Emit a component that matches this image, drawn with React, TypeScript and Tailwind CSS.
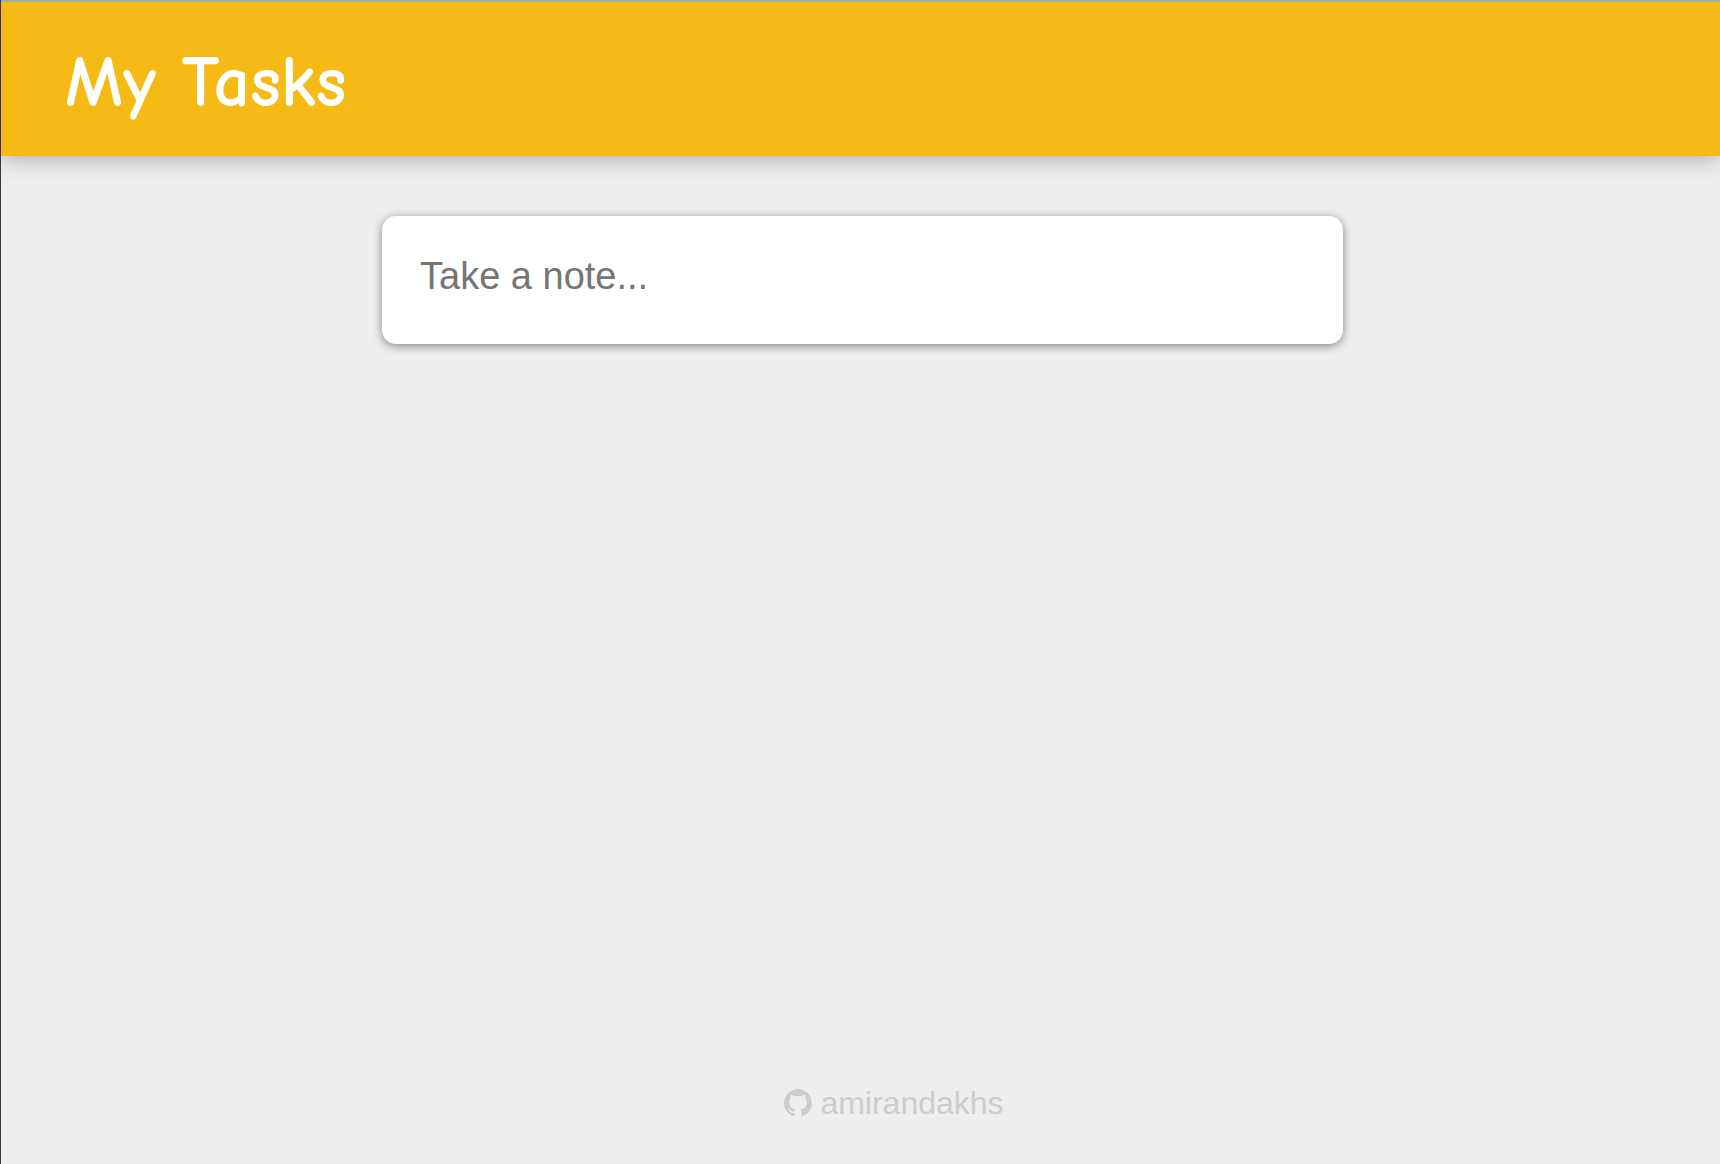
function GithubMark() {
  return (
    <svg viewBox="0 0 1536 1536" className="size-7" fill="currentColor" aria-hidden="true">
      <path d="M768 0q209 0 385.5 103t279.5 279.5 103 385.5q0 251-146.5 451.5t-378.5 277.5q-27 5-40-7t-13-30q0-3 .5-76.5t.5-134.5q0-97-52-142 57-6 102.5-18t94-39 81-66.5 53-105 20.5-150.5q0-119-79-206 37-91-8-204-28-9-81 11t-92 44l-38 24q-93-26-192-26t-192 26q-16-11-42.5-27t-83.5-38.5-85-13.5q-45 113-8 204-79 87-79 206 0 85 20.5 150t52.5 105 80.5 67 94 39 102.5 18q-39 36-49 103-21 10-45 15t-57 5-65.5-21.5-55.5-62.5q-19-32-48.5-52t-49.5-24l-20-3q-21 0-29 4.5t-5 11.5 9 14 13 12l7 5q22 10 43.5 38t31.5 51l10 23q13 38 44 61.5t67 30 69.5 7 55.5-3.5l23-4q0 38 .5 88.5t.5 54.5q0 18-13 30t-40 7q-232-77-378.5-277.5t-146.5-451.5q0-209 103-385.5t279.5-279.5 385.5-103z" />
    </svg>
  );
}

export default function App() {
  return (
    <div className="flex min-h-screen flex-col border-l border-[#3a3a3a] bg-[#eeeeee] font-['Liberation_Sans',Arial,sans-serif]">
      <header className="border-t-2 border-[#9fb49b] bg-[#f5ba15] px-16 pt-9 pb-7 shadow-[0_4px_20px_rgba(0,0,0,0.25)]">
        <h1 className="font-['Comic_Sans_MS','Comic_Neue',Lato,sans-serif] text-[72px] leading-[90px] font-bold text-white">
          My Tasks
        </h1>
      </header>
      <main className="flex flex-1 flex-col pt-[60px] pr-6 pl-7">
        <form
          className="mx-auto w-full max-w-[961px] rounded-[14px] bg-white px-[38px] pt-9 pb-11 shadow-[0_2px_10px_rgba(0,0,0,0.45)]"
          onSubmit={(event) => event.preventDefault()}
        >
          <input
            type="text"
            aria-label="Take a note"
            placeholder="Take a note..."
            className="block h-12 w-full bg-transparent text-[38px] leading-[48px] text-[#333333] outline-none placeholder:text-[#757575]"
          />
        </form>
      </main>
      <footer className="flex justify-center pb-[41px] pl-[67px]">
        <a
          href="https://github.com/amirandakhs"
          className="flex items-center gap-2 text-[32px] leading-[40px] text-[#cccccc]"
        >
          <GithubMark />
          amirandakhs
        </a>
      </footer>
    </div>
  );
}
